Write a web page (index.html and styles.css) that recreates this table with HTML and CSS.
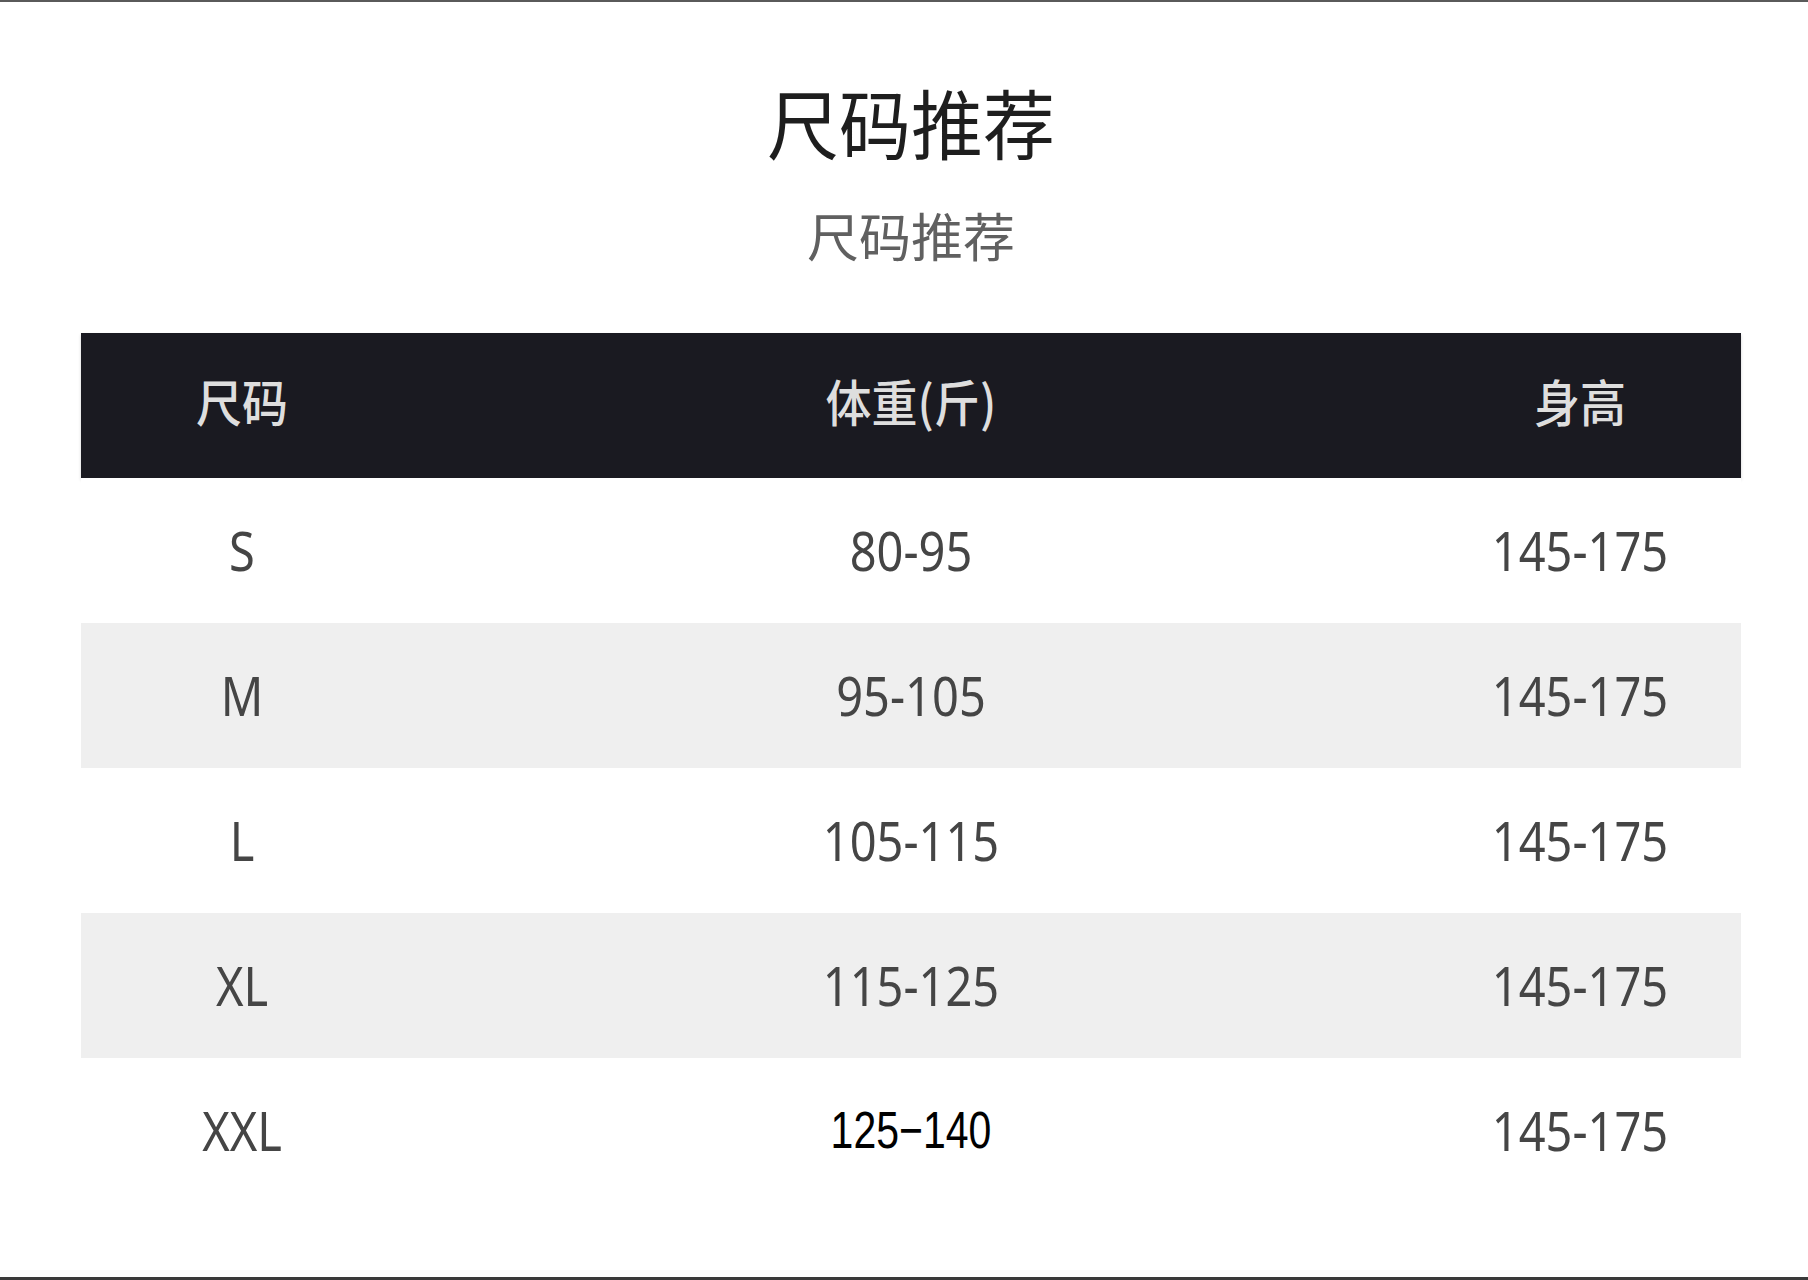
FILE: index.html
```html
<!DOCTYPE html>
<html lang="zh-CN">
<head>
<meta charset="utf-8">
<title>尺码推荐</title>
<link rel="stylesheet" href="styles.css">
</head>
<body>
<div class="page">
  <h1 class="title">尺码推荐</h1>
  <p class="subtitle">尺码推荐</p>
  <div class="table">
    <div class="row head">
      <div class="cell"><span>尺码</span></div>
      <div class="cell"><span>体重(斤)</span></div>
      <div class="cell"><span>身高</span></div>
    </div>
    <div class="row">
      <div class="cell"><span>S</span></div>
      <div class="cell"><span>80-95</span></div>
      <div class="cell"><span>145-175</span></div>
    </div>
    <div class="row alt">
      <div class="cell"><span>M</span></div>
      <div class="cell"><span>95-105</span></div>
      <div class="cell"><span>145-175</span></div>
    </div>
    <div class="row">
      <div class="cell"><span>L</span></div>
      <div class="cell"><span>105-115</span></div>
      <div class="cell"><span>145-175</span></div>
    </div>
    <div class="row alt">
      <div class="cell"><span>XL</span></div>
      <div class="cell"><span>115-125</span></div>
      <div class="cell"><span>145-175</span></div>
    </div>
    <div class="row">
      <div class="cell"><span>XXL</span></div>
      <div class="cell"><span class="plain">125−140</span></div>
      <div class="cell"><span>145-175</span></div>
    </div>
  </div>
</div>
</body>
</html>
```

FILE: styles.css
```css
html, body {
  margin: 0;
  padding: 0;
  background: #ffffff;
}

.page {
  box-sizing: border-box;
  width: 1808px;
  height: 1280px;
  border-top: 2px solid #5a5a5a;
  border-bottom: 3px solid #3a3a3a;
  padding: 82px 67px 0 81px;
  font-family: "Noto Sans", "Noto Sans CJK SC", sans-serif;
}

.title {
  margin: 0;
  text-align: center;
  font-family: "Noto Sans CJK SC", sans-serif;
  font-size: 72px;
  font-weight: 400;
  line-height: 74px;
  color: #1e1e1e;
  transform: scaleY(1.06);
}

.subtitle {
  margin: 51px 0 0;
  text-align: center;
  font-family: "Noto Sans CJK SC", sans-serif;
  font-size: 52px;
  font-weight: 400;
  line-height: 52px;
  color: #606060;
}

.table {
  margin-top: 72px;
  display: flex;
  flex-direction: column;
}

.row {
  display: grid;
  grid-template-columns: 322px 1fr 322px;
  height: 145px;
  align-items: center;
  background: #ffffff;
}

.row.alt {
  background: #efefef;
}

.row.head {
  box-sizing: border-box;
  height: 145px;
  padding-bottom: 12px;
  background: #1a1a21;
  box-shadow: 0 2px 3px rgba(0, 0, 0, 0.18);
}

.cell {
  display: flex;
  justify-content: center;
  align-items: center;
}

.cell span {
  display: inline-block;
  font-size: 47px;
  line-height: 1;
  color: #454545;
  transform: scaleY(1.16);
}

.head .cell span {
  font-family: "Noto Sans CJK SC", sans-serif;
  font-size: 46px;
  font-weight: 500;
  color: #dedede;
  transform: scaleY(1.08);
}

.cell span.plain {
  font-family: "Liberation Sans", sans-serif;
  font-size: 41px;
  color: #000000;
  transform: scaleY(1.28);
}
```
